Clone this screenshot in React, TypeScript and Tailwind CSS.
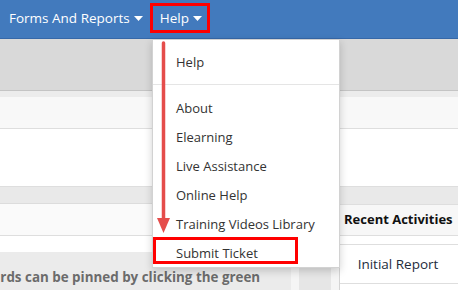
import React from "react";

function Caret() {
  return (
    <svg width="9" height="5" viewBox="0 0 9 5" className="ml-[4px]">
      <path d="M0 0 L9 0 L4.5 5 Z" fill="#ffffff" />
    </svg>
  );
}

const helpItems = ["About", "Elearning", "Live Assistance", "Online Help", "Training Videos Library", "Submit Ticket"];

export default function App() {
  return (
    <div className="relative h-[290px] w-[458px] overflow-hidden bg-white font-['Open_Sans',sans-serif]">
      <nav className="flex h-[39px] items-center border-b border-[#3668a8] bg-[#427abd] pb-[2px] text-[13.5px] text-white">
        <div className="ml-[9px] flex items-center">
          Forms And Reports <Caret />
        </div>
        <div className="ml-[7px] flex h-[30px] items-center border-[3px] border-[#ff0000] pl-[7px] pr-[5px]">
          Help <Caret />
        </div>
      </nav>

      <div className="h-[52px] border-b border-[#c4c4c4] bg-[#d9d9d9]" />
      <div className="h-[6px] bg-[#ececec]" />
      <div className="h-[32px] border-b border-[#dedede] bg-[#f8f8f8]" />
      <div className="h-[58px] border-b border-[#dedede] bg-white" />

      <div className="flex">
        <div className="w-[339px]">
          <div className="h-[17px] border-b border-[#dcdcdc] bg-[#e9e9e9]" />
          <div className="h-[32px] border-b border-[#dedede] bg-[#fafafa]" />
          <div className="h-[16px] bg-white" />
          <div className="flex h-[38px]">
            <div className="w-[291px] overflow-hidden bg-[#ebebeb]">
              <p className="-ml-[58px] mt-[15px] whitespace-nowrap text-[13.4px] font-bold text-[#6b6b6b]">
                Dashboards can be pinned by clicking the green
              </p>
            </div>
            <div className="w-[8px] bg-[#f5f5f5]" />
            <div className="w-[32px] bg-[#e6e6e6]" />
            <div className="w-[8px] bg-[#f5f5f5]" />
          </div>
        </div>
        <div className="flex-1 border-l border-[#d4d4d4]">
          <div className="h-[17px] bg-[#e9e9e9]" />
          <div className="flex h-[32px] items-center border-y border-[#dedede] bg-[#f7f7f7] pl-[4px] text-[13px] font-bold text-[#111]">
            Recent Activities
          </div>
          <div className="h-[8px]" />
          <div className="flex h-[40px] items-center justify-center border-y border-[#dedede] pr-[2px] text-[13.5px] text-[#232c3b]">
            Initial Report
          </div>
        </div>
      </div>

      <div className="absolute left-[152px] top-[39px] h-[229px] w-[188px] border border-[#d2d2d2] bg-white pt-[8px] text-[13px] text-[#333] shadow-[0_3px_8px_rgba(0,0,0,0.18)]">
        <div className="flex h-[29px] items-center pl-[23px]">Help</div>
        <div className="my-[7px] h-px bg-[#e5e5e5]" />
        <div className="mt-[9px]">
          {helpItems.map((item) => (
            <div key={item} className="flex h-[29px] items-center pl-[23px]">
              {item}
            </div>
          ))}
        </div>
        <div className="absolute left-0 top-[197px] h-[27px] w-[145px] border-[3px] border-[#ff0000]" />
      </div>

      <svg className="absolute left-0 top-0" width="458" height="290">
        <line x1="163.5" y1="43" x2="163.5" y2="222" stroke="#e54d4b" strokeWidth="3.5" strokeLinecap="round" />
        <path d="M157 218 L170 218 L163.5 233 Z" fill="#e54d4b" />
      </svg>
    </div>
  );
}
